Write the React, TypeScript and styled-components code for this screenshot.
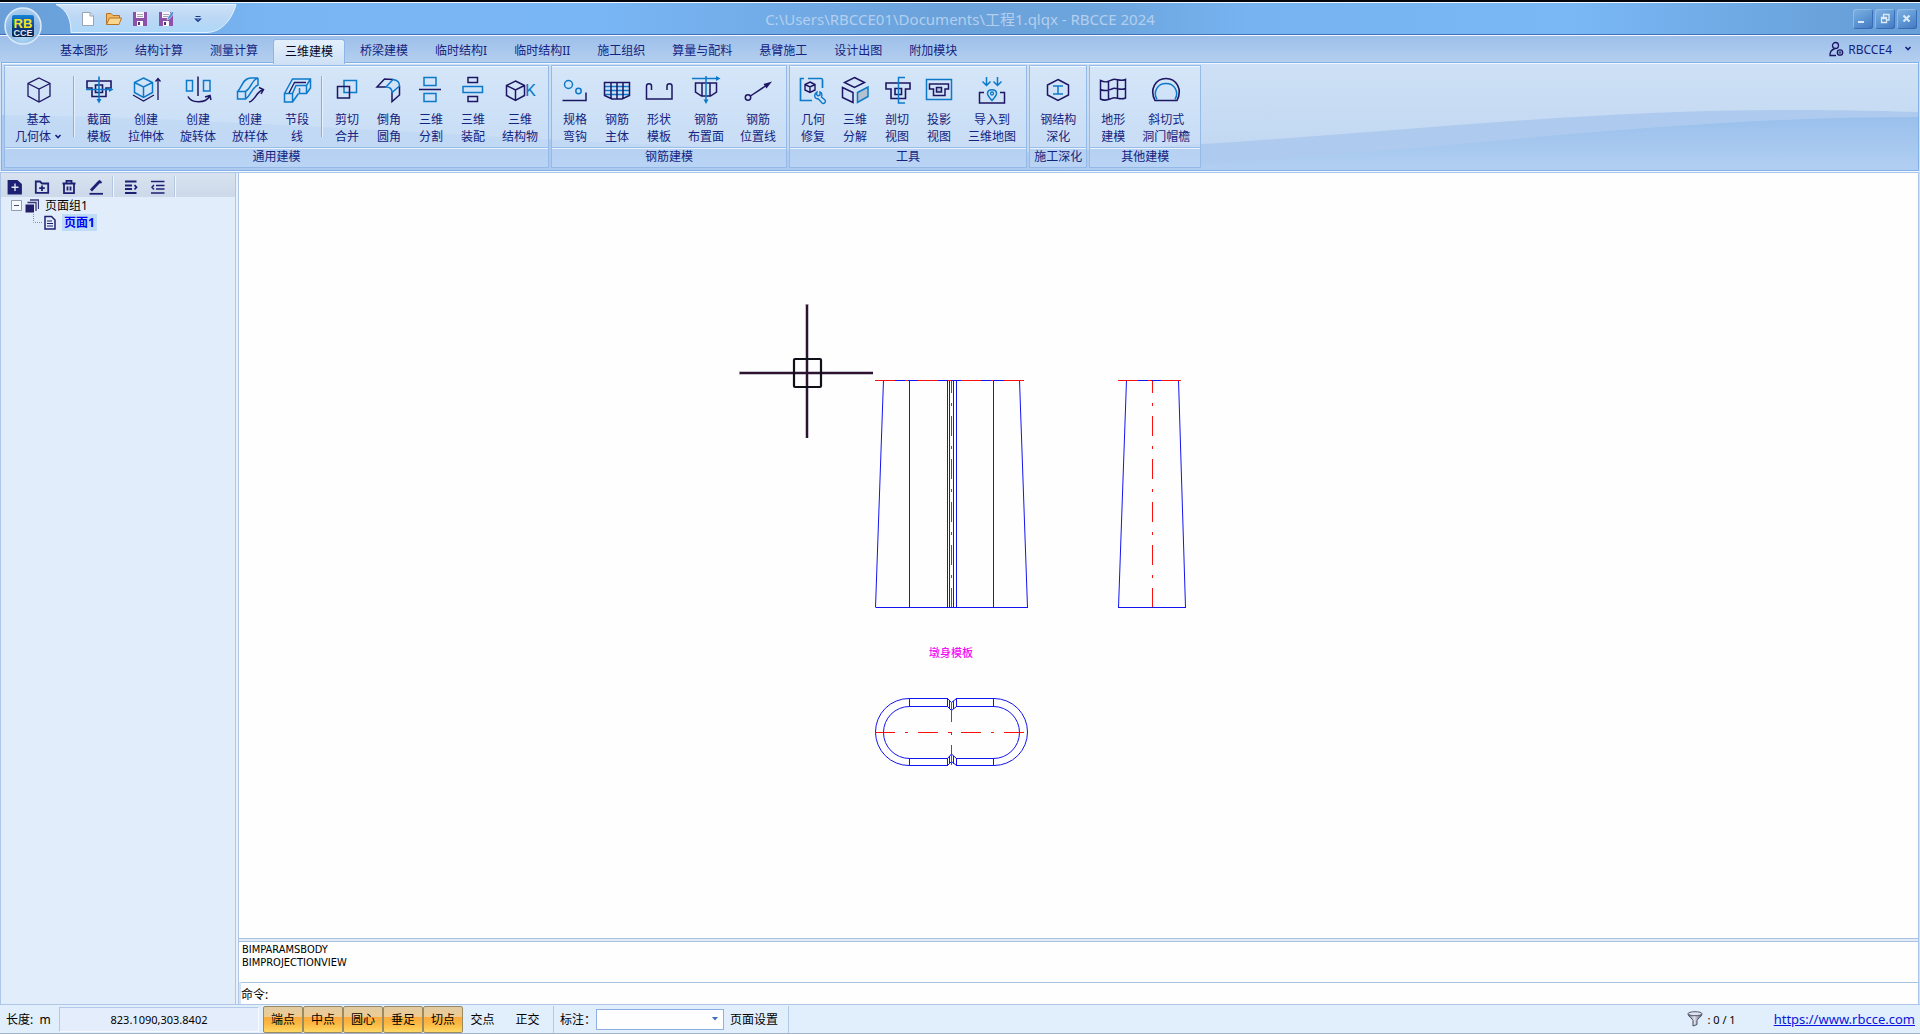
import React from "react";
import styled, { createGlobalStyle, css } from "styled-components";

const NAVY = "#1d1663";
const BLUE = "#0c79c9";
const INK = "#14237f";

const GlobalStyle = createGlobalStyle`
  *, *::before, *::after { box-sizing: border-box; }
  html, body, #root { height: 100%; }
  body {
    margin: 0;
    overflow: hidden;
    font-family: "Noto Sans", "Noto Sans CJK SC", sans-serif;
    font-size: 12px;
    color: #000;
  }
  button, input, select { font: inherit; color: inherit; }
  button { margin: 0; padding: 0; border: 0; background: none; cursor: pointer; }
`;

const Window = styled.div`
  display: flex;
  flex-direction: column;
  height: 100%;
  background: #d3e4f8;
`;

/* Title bar */

const TitleBar = styled.header`
  position: relative;
  display: flex;
  align-items: center;
  flex: none;
  height: 36px;
  padding: 0 3px 0 5px;
  border-top: 2px solid #05060c;
  border-bottom: 1px solid #f4f9ff;
  box-shadow: inset 0 1px 0 #eef6ff, inset 0 -1px 0 #4170bb;
  background: linear-gradient(
    90deg,
    #6a9fd8 0%, #6aa2dc 3%, #79b5f3 14%, #79b6f5 31%,
    #6ba2db 49%, #6ca4dc 57%, #76b3f0 65%, #79b7f5 82%, #68a0d8 97%, #68a0d8 100%
  );
`;

const AppLogo = styled.button`
  position: absolute;
  top: 5px;
  left: 4px;
  z-index: 2;
  width: 38px;
  height: 38px;
  svg { display: block; }
`;

const QuickAccess = styled.div`
  position: relative;
  display: flex;
  align-items: center;
  align-self: flex-start;
  gap: 10px;
  width: 184px;
  height: 29px;
  margin: 2px 0 0 51px;
  padding-left: 24px;
`;

const QuickShape = styled.svg`
  position: absolute;
  inset: 0;
  width: 184px;
  height: 29px;
`;

const QuickButton = styled.button<{ $last?: boolean }>`
  position: relative;
  width: 16px;
  height: 16px;
  margin-left: ${(p) => (p.$last ? "6px" : "0")};
  svg { display: block; }
`;

const Title = styled.h1`
  position: absolute;
  inset: 0;
  margin: 0;
  text-align: center;
  font: 400 15px/34px "Noto Sans", "Noto Sans CJK SC", sans-serif;
  color: #b4cfee;
  pointer-events: none;
`;

const WindowButtons = styled.div`
  position: relative;
  display: flex;
  gap: 2px;
  margin-left: auto;
`;

const WindowButton = styled.button`
  width: 20px;
  height: 20px;
  border-radius: 3px;
  background: linear-gradient(150deg, #83b2e2, #5d97d3 50%, #4476bf);
  box-shadow: inset -1px -1px 0 #3a6bb8, inset 1px 1px 0 #8dbbe8;
  svg { display: block; }
`;

/* Ribbon */

const TabRow = styled.nav`
  display: flex;
  align-items: flex-end;
  flex: none;
  gap: 3px;
  height: 26px;
  padding: 0 21px 0 48px;
  background: linear-gradient(#9dbfe9, #b4cff0);
`;

const Tab = styled.button<{ $active?: boolean }>`
  height: 24px;
  padding: 0 12px;
  line-height: 26px;
  color: ${INK};
  white-space: nowrap;
  ${(p) =>
    p.$active &&
    css`
      position: relative;
      z-index: 1;
      height: 25px;
      margin-bottom: -2px;
      border: 1px solid #8db6e8;
      border-bottom: 0;
      border-radius: 3px 3px 0 0;
      padding: 0 11px;
      line-height: 24px;
      background: linear-gradient(#e4effb, #cfe1f6);
      color: #05051c;
    `}
`;

const UserMenu = styled.button`
  display: flex;
  align-items: center;
  gap: 4px;
  height: 26px;
  margin-left: auto;
  margin-right: -13px;
  color: ${INK};
  svg:last-child { margin-left: 8px; }
`;

const Ribbon = styled.section`
  position: relative;
  display: flex;
  flex: none;
  gap: 2px;
  height: 109px;
  margin: 0 1px;
  padding: 2px 2px 3px;
  border: 1px solid #83b0e8;
  box-shadow: inset 0 1px 0 #f2f8ff;
  background: #c9dcf3;
`;

const Waves = styled.svg`
  position: absolute;
  inset: 1px 0 0;
  width: 100%;
  height: 106px;
`;

const Group = styled.div`
  position: relative;
  display: flex;
  flex-direction: column;
  height: 103px;
  border: 1px solid #96bae8;
  box-shadow: inset 0 1px 0 #f0f7ff;
  background: linear-gradient(rgba(215, 231, 249, 0.8), rgba(205, 225, 248, 0.65) 60%, rgba(205, 225, 248, 0.6));
`;

const GroupItems = styled.div`
  display: flex;
  flex: 1;
  padding: 0 2px;
`;

const GroupTitle = styled.div`
  height: 20px;
  border-top: 1px solid #9abde8;
  box-shadow: inset 0 1px 0 #e8f2fe;
  background: linear-gradient(#b5d0f0, #b9d4f5);
  color: ${INK};
  line-height: 18px;
  text-align: center;
  white-space: nowrap;
`;

const Tool = styled.button`
  display: flex;
  flex-direction: column;
  align-items: center;
  min-width: 42px;
  padding: 8px 8px 0;
  color: ${INK};
  line-height: 17px;
  white-space: nowrap;
`;

const ToolIcon = styled.svg`
  display: block;
  width: 30px;
  height: 30px;
  margin: 0 -2px 7px;
  fill: none;
  stroke: ${NAVY};
  stroke-width: 1.3;
  overflow: visible;
`;

const ToolLine = styled.span`
  display: flex;
  align-items: center;
  gap: 3px;
`;

const Divider = styled.span`
  width: 2px;
  height: 61px;
  margin: 10px 3px 0;
  border-left: 1px solid #86aede;
  border-right: 1px solid #e6f1fd;
`;

/* Workspace */

const Workspace = styled.div`
  display: flex;
  flex: 1;
  min-height: 0;
  margin: 1px 1px 0 0;
  border-top: 1px solid #a9c5e8;
  border-right: 1px solid #a9c5e8;
  box-shadow: 0 -1px 0 #f4f9ff;
`;

const Sidebar = styled.aside`
  display: flex;
  flex-direction: column;
  flex: none;
  width: 236px;
  border-left: 1px solid #b0c6e6;
  border-right: 1px solid #b0c6e6;
  background: #e2edfb;
`;

const SideTools = styled.div`
  display: flex;
  align-items: center;
  flex: none;
  gap: 11px;
  height: 24px;
  padding: 3px 0 0 6px;
  background: linear-gradient(#d8e2f0, #ccd9ea);
`;

const SideButton = styled.button`
  width: 16px;
  height: 16px;
  svg { display: block; fill: none; stroke: #1d2173; stroke-width: 1.8; }
`;

const SideDivider = styled.span`
  width: 2px;
  height: 21px;
  margin: 0 -2px 0 -3px;
  border-left: 1px solid #b4c6e0;
  border-right: 1px solid #f0f6fd;
`;

const Tree = styled.ul`
  margin: 0;
  padding: 0 0 0 10px;
  list-style: none;
`;

const TreeRow = styled.li<{ $child?: boolean }>`
  display: flex;
  align-items: center;
  gap: 3px;
  height: 17px;
  padding-left: ${(p) => (p.$child ? "20px" : "0")};
  svg { flex: none; }
`;

const TreeText = styled.button<{ $selected?: boolean }>`
  height: 17px;
  margin-left: ${(p) => (p.$selected ? "2px" : "1px")};
  padding: 0 2px;
  line-height: 17px;
  ${(p) =>
    p.$selected &&
    css`
      background: #bfdcf7;
      color: #0000f0;
      font-weight: 700;
    `}
`;

const Splitter = styled.div`
  flex: none;
  width: 3px;
  border-right: 1px solid #b0c6e6;
  background: #e9f1fb;
`;

const Main = styled.main`
  display: flex;
  flex-direction: column;
  flex: 1;
  min-width: 0;
`;

const Drawing = styled.svg`
  display: block;
  flex: 1;
  width: 100%;
  min-height: 0;
  background: #fdfefd;
`;

const HSplitter = styled.div`
  flex: none;
  height: 4px;
  border-top: 1px solid #a9c2e0;
  border-bottom: 1px solid #a9c2e0;
  background: #e3edf9;
`;

const History = styled.div`
  flex: none;
  height: 40px;
  padding: 1px 3px;
  background: #fdfefd;
  font-family: "DejaVu Sans Condensed", "DejaVu Sans", sans-serif;
  font-size: 11px;
  line-height: 13px;
`;

const CommandRow = styled.div`
  display: flex;
  align-items: center;
  flex: none;
  height: 22px;
  margin-left: 2px;
  border-top: 1px solid #a9c2e0;
  background: #fdfefd;
  input {
    flex: 1;
    height: 18px;
    padding: 0 4px;
    border: 0;
    outline: 0;
    background: transparent;
  }
`;

/* Status bar */

const StatusBar = styled.footer`
  display: flex;
  align-items: center;
  flex: none;
  height: 30px;
  padding: 0 5px 0 6px;
  border-top: 1px solid #b0c6e6;
  border-bottom: 1px solid #a5b4c8;
  background: #e1eefb;
`;

const Unit = styled.span`
  width: 53px;
  white-space: pre;
`;

const Coordinates = styled.output`
  width: 200px;
  height: 25px;
  margin-right: 4px;
  border: 1px solid #b3c8e6;
  border-right-color: #f6faff;
  border-bottom-color: #f6faff;
  background: #e3edfb;
  font-size: 11px;
  line-height: 23px;
  text-align: center;
`;

const Snap = styled.button<{ $on?: boolean }>`
  width: 40px;
  height: 27px;
  ${(p) =>
    p.$on
      ? css`
          border: 1px solid #9a8a62;
          border-radius: 2px;
          background: linear-gradient(#e2cba2, #eecb92 38%, #fbab3c 42%, #fbb640 65%, #ffd865);
        `
      : css`
          width: 45px;
          padding-right: 6px;
        `}
`;

const StatusDivider = styled.span`
  width: 1px;
  height: 27px;
  margin-right: 6px;
  background: #b3c8e6;
`;

const LabelField = styled.label`
  display: flex;
  align-items: center;
  margin-right: 6px;
`;

const SelectWrap = styled.span`
  position: relative;
  display: flex;
  svg { position: absolute; top: 8px; right: 6px; pointer-events: none; }
`;

const StyleSelect = styled.select`
  width: 128px;
  height: 21px;
  margin: 0;
  border: 1px solid #8eb0e0;
  border-radius: 0;
  background: #fdfefd;
  appearance: none;
`;

const PageSetup = styled.button`
  margin-right: 10px;
  line-height: 27px;
`;

const Filter = styled.span`
  display: flex;
  align-items: center;
  gap: 4px;
  margin: 0 38px 0 auto;
  font-size: 11px;
  white-space: pre;
`;

const Site = styled.a`
  color: #0a16e0;
  font-size: 13px;
  text-decoration: underline;
`;

const icons: Record<string, React.ReactNode> = {
  solid: (
    <path d="M15 4 26 9.500V22L15 28 4 22V9.500ZM4 9.500 15 15 26 9.500M15 15V28" />
  ),
  section: (
    <>
      <path d="M3 7H27V14H22V22.500H8V14H3ZM11.500 11H18.500V18.500H11.500Z" strokeWidth={1.6} />
      <g stroke={BLUE}>
        <path d="M15 2.500V26M2 15.500H26" strokeWidth={1.6} />
        <path d="M12.500 25H17.500L15 29.500ZM25 13V18L29.500 15.500Z" fill={BLUE} stroke="none" />
      </g>
    </>
  ),
  extrude: (
    <>
      <path stroke={BLUE} strokeWidth={1.5} d="M12.500 4 21.500 8.500V18.500L12.500 23.500 3.500 18.500V8.500ZM3.500 8.500 12.500 13 21.500 8.500M12.500 13V23.500" />
      <path d="M2 21 12.500 27 23 21M27 26V5M24.500 7.500 27 4.500 29.500 7.500" />
    </>
  ),
  revolve: (
    <>
      <path stroke={BLUE} strokeWidth={1.5} d="M3.500 6.500H9.500V17H3.500ZM20.500 6.500H27V17H20.500Z" />
      <path d="M15 2.500V22" strokeWidth={1.5} />
      <path d="M5 22.500C8 29 22 30 26.500 22.500M22 23 27 21.500 28 26" strokeWidth={1.5} />
    </>
  ),
  loft: (
    <>
      <path stroke={BLUE} d="M2.500 17.500H10.500V25H2.500ZM2.500 17.500C7 14 7 5 15 4H23C16 6 17 14 10.500 17.500M10.500 25C16 22 16 14 23 11V4" strokeWidth={1.5} />
      <path d="M14 28C20 27 21 18 27.500 16M24 13.500 28.500 15.500 26 20" strokeWidth={1.5} />
    </>
  ),
  segment: (
    <>
      <path stroke={BLUE} strokeWidth={1.5} d="M2.500 19.500H10.500V28H2.500ZM2.500 19.500 10.500 5H28.500V14L24.500 19.500H17.500V14M10.500 19.500 14 11.500H24.500L28.500 5M10.500 28 16.500 19.500M24.500 11.500V19.500" />
      <path d="M7 19 12.500 8.500H24" />
    </>
  ),
  cutMerge: (
    <>
      <path stroke={BLUE} strokeWidth={1.5} d="M12 6.500H24.500V18.500H12Z" />
      <path strokeWidth={1.5} d="M5.500 12.500H17.500V24H5.500Z" />
    </>
  ),
  fillet: (
    <>
      <path d="M19 5.500 10.500 5 3 13H12M25.500 12V21L18 27.500V18" strokeWidth={1.5} />
      <path stroke={BLUE} strokeWidth={1.5} d="M19 5.500C23 6 25.500 8 25.500 12L18 18.500C18 15 16 13 12 13Z" />
    </>
  ),
  split: (
    <>
      <path stroke={BLUE} strokeWidth={1.5} d="M8 3.500H20V11.500H8ZM8 19.500H20V27.500H8Z" />
      <path d="M3 15.500H25" strokeWidth={1.5} />
    </>
  ),
  assemble: (
    <>
      <path d="M10 3.500H19.500V8.500H10ZM10 22.500H19.500V27.500H10Z" strokeWidth={1.5} />
      <path stroke={BLUE} strokeWidth={1.5} d="M5 12.500H24.500V18.500H5Z" />
    </>
  ),
  structure: (
    <>
      <path d="M10.500 7 19.500 11.500V21.500L10.500 26.500 1.500 21.500V11.500ZM1.500 11.500 10.500 16 19.500 11.500M10.500 16V26.500" strokeWidth={1.5} />
      <text x="20" y="22" fontSize="17" fill={BLUE} stroke="none" fontFamily="Roboto, sans-serif">K</text>
    </>
  ),
  hookSpec: (
    <>
      <g stroke={BLUE} strokeWidth={1.5}>
        <circle cx="8.500" cy="10.500" r="4" />
        <circle cx="18.500" cy="17" r="2.700" />
      </g>
      <path d="M2.500 26.500H26V18.500" strokeWidth={1.5} />
    </>
  ),
  rebarBody: (
    <>
      <path stroke={BLUE} d="M3 12.500H27M3 16.500H27M3 20.500H27" />
      <path strokeWidth={1.5} d="M2.500 8.500H27.500V21.500L20 25H10L2.500 21.500ZM9 8.500V24M15 8.500V25M21 8.500V24" />
    </>
  ),
  shapeForm: (
    <path strokeWidth={1.5} d="M7.500 16V12C7.500 9 2.500 9 2.500 12V25H28V12C28 9 23 9 23 12V16" />
  ),
  layoutFace: (
    <>
      <path strokeWidth={1.5} d="M4.500 9H25.500V18L19.500 22H10.500L4.500 18ZM11 9V22M19 9V22" />
      <g stroke={BLUE} strokeWidth={1.5}>
        <path d="M1 4.500H25M15 2V27" />
        <path d="M25 2V7L29.500 4.500ZM12.500 25.500H17.500L15 30Z" fill={BLUE} stroke="none" />
      </g>
    </>
  ),
  positionLine: (
    <>
      <circle cx="5" cy="23.500" r="2.700" strokeWidth={1.5} />
      <path strokeWidth={1.5} d="M7.500 22 24 11" />
      <path d="M29 7.500 20.500 10 23.500 14.500Z" fill={NAVY} stroke="none" />
    </>
  ),
  repair: (
    <>
      <path stroke={BLUE} strokeWidth={1.7} d="M6 4.500H2.500V26.500H14M10 4.500H23C24.500 4.500 24.500 5 24.500 6.500V14" />
      <path strokeWidth={1.4} d="M12 8 17 10.500V16L12 18.500 7 16V10.500ZM7 10.500 12 13 17 10.500M12 13V18.500" />
      <path stroke={BLUE} strokeWidth={1.4} d="M19 18C15.500 20 16 25 20.500 25L24 29C26 30.500 28.500 28 27 26L23.500 23C24.500 20.500 23.500 18.500 22 18V21L20 22 18.500 20.500Z" />
    </>
  ),
  explode: (
    <>
      <path strokeWidth={1.5} d="M14.500 3.500 24.500 8.500 14.500 13.500 4.500 8.500ZM2.500 13.500 13 18.500V28.500L2.500 23.500Z" />
      <path stroke={BLUE} strokeWidth={1.5} fill="#b4c1cf" d="M17.500 18.500 28 13V22.500L17.500 28.500Z" />
    </>
  ),
  cutView: (
    <>
      <path strokeWidth={1.6} d="M4 9H28V15H23.500V24.500H9V15H4ZM13 14.500H19.500V20.500H13Z" />
      <path stroke={BLUE} strokeWidth={1.5} d="M23 3.500H16.500V29H23" />
    </>
  ),
  projectView: (
    <>
      <path stroke={BLUE} strokeWidth={1.5} d="M2.500 5.500H27.500V25.500H2.500Z" />
      <path strokeWidth={1.5} d="M5.500 10H24.500V15H21V21.500H9.500V15H5.500Z" />
      <path strokeWidth={1.5} fill="#b4c1e0" d="M12.500 13.500H17.500V18H12.500Z" />
    </>
  ),
  importMap: (
    <>
      <path stroke={BLUE} strokeWidth={1.5} d="M9.500 3V11M5.500 7.500 9.500 11.500 13.500 7.500M20.500 3V11M16.500 7.500 20.500 11.500 24.500 7.500M15 26.500C12 23 10.500 21.500 10.500 19.500 10.500 14.500 19.500 14.500 19.500 19.500 19.500 21.500 18 23 15 26.500Z" />
      <circle cx="15" cy="19.500" r="1.500" stroke={BLUE} />
      <path strokeWidth={1.5} d="M7 18.500H2.500V29H27.500V18.500H23" />
    </>
  ),
  steel: (
    <>
      <path strokeWidth={1.5} d="M15 5.500 25.500 11V21L15 26.500 4.500 21V11Z" />
      <path stroke={BLUE} strokeWidth={1.5} d="M10 12H20M10 20H20M15 12V20" />
    </>
  ),
  terrain: (
    <path strokeWidth={1.5} d="M2.500 6.500C9 10 11 6.500 15 5.500S22 8 27.500 5.500V24C22 26.500 19 23 15 24S8 28 2.500 25ZM2.500 15.500C9 18.500 11 15.500 15 14.500S22 17 27.500 14.500M10.500 7.500V26M19.500 5.500V24" />
  ),
  portal: (
    <>
      <path strokeWidth={1.6} d="M4 26.500C-2 15 5 4.500 15 4.500S32 15 26 26.500Z" />
      <path stroke={BLUE} strokeWidth={1.5} d="M6 25.500C1.500 17 7 9.500 15 9.500S28.500 17 24 25.500" />
    </>
  ),
};

type ToolDef = { icon: string; lines: [string, string]; menu?: boolean; divider?: boolean };

const groups: { title: string; tools: ToolDef[] }[] = [
  {
    title: "通用建模",
    tools: [
      { icon: "solid", lines: ["基本", "几何体"], menu: true, divider: true },
      { icon: "section", lines: ["截面", "模板"] },
      { icon: "extrude", lines: ["创建", "拉伸体"] },
      { icon: "revolve", lines: ["创建", "旋转体"] },
      { icon: "loft", lines: ["创建", "放样体"] },
      { icon: "segment", lines: ["节段", "线"], divider: true },
      { icon: "cutMerge", lines: ["剪切", "合并"] },
      { icon: "fillet", lines: ["倒角", "圆角"] },
      { icon: "split", lines: ["三维", "分割"] },
      { icon: "assemble", lines: ["三维", "装配"] },
      { icon: "structure", lines: ["三维", "结构物"] },
    ],
  },
  {
    title: "钢筋建模",
    tools: [
      { icon: "hookSpec", lines: ["规格", "弯钩"] },
      { icon: "rebarBody", lines: ["钢筋", "主体"] },
      { icon: "shapeForm", lines: ["形状", "模板"] },
      { icon: "layoutFace", lines: ["钢筋", "布置面"] },
      { icon: "positionLine", lines: ["钢筋", "位置线"] },
    ],
  },
  {
    title: "工具",
    tools: [
      { icon: "repair", lines: ["几何", "修复"] },
      { icon: "explode", lines: ["三维", "分解"] },
      { icon: "cutView", lines: ["剖切", "视图"] },
      { icon: "projectView", lines: ["投影", "视图"] },
      { icon: "importMap", lines: ["导入到", "三维地图"] },
    ],
  },
  { title: "施工深化", tools: [{ icon: "steel", lines: ["钢结构", "深化"] }] },
  {
    title: "其他建模",
    tools: [
      { icon: "terrain", lines: ["地形", "建模"] },
      { icon: "portal", lines: ["斜切式", "洞门帽檐"] },
    ],
  },
];

const tabs = [
  "基本图形", "结构计算", "测量计算", "三维建模", "桥梁建模", "临时结构I",
  "临时结构II", "施工组织", "算量与配料", "悬臂施工", "设计出图", "附加模块",
];

const snaps = ["端点", "中点", "圆心", "垂足", "切点"];

const Chevron = () => (
  <svg width="8" height="6" viewBox="0 0 8 6" fill="none" stroke={INK} strokeWidth="1.6">
    <path d="M1.500 1 4 3.500 6.500 1" />
  </svg>
);

const Logo = () => (
  <svg width="38" height="38" viewBox="0 0 38 38">
    <defs>
      <radialGradient id="orb" cx="50%" cy="75%" r="70%">
        <stop offset="0" stopColor="#b9e0fa" />
        <stop offset="0.6" stopColor="#86b5e2" />
        <stop offset="1" stopColor="#a9cbee" />
      </radialGradient>
      <linearGradient id="badge" x1="0" y1="0" x2="0" y2="1">
        <stop offset="0" stopColor="#1683d8" />
        <stop offset="0.55" stopColor="#0c3f86" />
        <stop offset="1" stopColor="#0a1c3e" />
      </linearGradient>
    </defs>
    <circle cx="19" cy="19" r="18" fill="url(#orb)" stroke="#dcebfa" strokeWidth="1.500" />
    <rect x="8" y="8" width="22" height="22" rx="2" fill="url(#badge)" />
    <text x="19" y="20.500" textAnchor="middle" fontFamily="Liberation Sans, sans-serif" fontWeight="700" fontSize="13" fill="#f6e51c">RB</text>
    <text x="19" y="29" textAnchor="middle" fontFamily="Liberation Sans, sans-serif" fontWeight="700" fontSize="9" fill="#e3e8f2">CCE</text>
  </svg>
);

const Disk = ({ pen }: { pen?: boolean }) => (
  <svg width="16" height="16" viewBox="0 0 16 16">
    <path d="M1 1H15V15H1Z" fill="#8b52a8" />
    <path d="M4 1H12V7H4ZM5 10H11V15H5Z" fill="#fbf8fd" />
    <path d="M5 3.500H11M5 5.500H11" stroke="#a9a2b5" />
    <path d="M6 11H8V14H6Z" fill="#55306e" />
    {pen && <path d="M9 9 10 6 14 0.500 16 2 12 7.500Z" fill="#4a93d4" stroke="#e1eefa" strokeWidth="0.600" />}
  </svg>
);

const quickIcons: { name: string; art: React.ReactNode }[] = [
  {
    name: "新建",
    art: (
      <svg width="16" height="16" viewBox="0 0 16 16">
        <path d="M2.500 1.500H10L13.500 5V14.500H2.500Z" fill="#fff" stroke="#98a3b5" />
        <path d="M10 1.500V5H13.500" fill="#dfe5ee" stroke="#98a3b5" />
      </svg>
    ),
  },
  {
    name: "打开",
    art: (
      <svg width="16" height="16" viewBox="0 0 16 16">
        <path d="M0.500 13.500V2.500H5L7 4.500H13.500V7" fill="#f2b861" stroke="#b4752b" />
        <path d="M0.500 13.500 3.500 7H15.500L13 13.500Z" fill="#fcd78f" stroke="#b4752b" />
      </svg>
    ),
  },
  { name: "保存", art: <Disk /> },
  { name: "另存为", art: <Disk pen /> },
  {
    name: "自定义",
    art: (
      <svg width="16" height="16" viewBox="0 0 16 16" fill="none" stroke="#173a8e" strokeWidth="1.200">
        <path d="M5.500 5.500H10.500M5.500 8H10.500L8 10.500Z" />
      </svg>
    ),
  },
];

const sideIcons: { name: string; art: React.ReactNode }[] = [
  {
    name: "新建页面",
    art: (
      <>
        <path d="M1.500 2H10L14 5.500V14.500H1.500Z" fill="#1d2173" />
        <path d="M8 4.500V12M4.500 8.300H11.500" stroke="#dfe7f3" strokeWidth={1.4} />
      </>
    ),
  },
  {
    name: "新建页面组",
    art: <path d="M1.800 2.500H6L8 4.500H14.200V13.800H1.800ZM8 6.500V12M5.200 9.200H10.800" />,
  },
  {
    name: "删除",
    art: <path d="M1.500 4.500H14.500M5.500 4.500V1.800H10.500V4.500M3 4.500V14.200H13V4.500M6.500 7.500V11.500M9.500 7.500V11.500" />,
  },
  {
    name: "重命名",
    art: (
      <>
        <path d="M1.500 14.800H15" />
        <path d="M3 11.500 11.500 2.500" strokeWidth={2.800} />
        <path d="M11 1.500 13.500 4" />
      </>
    ),
  },
  { name: "展开", art: <path d="M2 2.500H13.500M2 6.500H9M2 10H9M2 14H13.500M11.500 6 13.500 8.300 11.500 10.500" /> },
  { name: "折叠", art: <path d="M1 2.500H14.500M6 6.500H14.500M6 10H14.500M1 14H14.500M4 6 2 8.300 4 10.500" strokeWidth={1.500} /> },
];

const windowIcons: { name: string; art: React.ReactNode }[] = [
  { name: "最小化", art: <path d="M5 13H11" strokeWidth="2" /> },
  { name: "还原", art: <path d="M8.500 8V5.500H14V11H11.500M6.500 8.500H11.500V13.500H6.500ZM6.500 9.500H11.500" strokeWidth="1.300" /> },
  { name: "关闭", art: <path d="M6.500 6.500 12.500 12.500M12.500 6.500 6.500 12.500" strokeWidth="2.200" /> },
];

const BLUE_LINE = "#1414f0";

const Model = () => (
  <Drawing role="img" aria-label="墩身模板">
    <g transform="translate(-239 -173)" fill="none" shapeRendering="crispEdges">
      <g stroke={BLUE_LINE}>
        <path d="M883 380.500H1020M875.500 607.500H1028M909.500 380V607M947.500 380V607M949.500 380V607M953.500 380V607M956.500 380V607M993.500 380V607" />
        <path d="M883.500 380 875.500 607.500M1019.500 380 1027.500 607.500M1126.500 380 1118.500 607.500M1178.500 380 1185.500 607.500" shapeRendering="auto" />
        <path d="M1126 380.500H1179M1118 607.500H1186" />
        <g shapeRendering="auto">
          <path d="M947.500 698.500H909A33.500 33.500 0 0 0 909 765.500H947.500L951.500 761.500 956.500 765.500H994A33.500 33.500 0 0 0 994 698.500H956.500L951.500 702.500Z" />
          <path d="M947.500 706.500H909.500A26 26 0 0 0 909.500 758.500H947.500L951.500 754 956.500 758.500H993.500A26 26 0 0 0 993.500 706.500H956.500L951.500 710.500Z" />
        </g>
        <path d="M909.500 698V707M909.500 758V766M993.500 698V707M993.500 758V766M947.500 698V707M956.500 698V707M947.500 758V766M956.500 758V766M949.500 701V709M953.500 701V709M949.500 756V764M953.500 756V764" />
      </g>
      <g stroke="#fb1010" strokeDasharray="20 10 3 10">
        <path d="M875 380.500H1024M1118 380.500H1182M875 732.500H1024" />
        <path d="M951.500 381V607M1152.500 381V607" strokeDashoffset="8" />
        <path d="M951.500 702V765" />
      </g>
      <g shapeRendering="auto">
        <path d="M807 304V438M739 373H873" stroke="#8b8798" strokeWidth="3" />
        <path d="M807 305V438M740 373H873" stroke="#2e1230" strokeWidth="2" />
        <rect x="794" y="359" width="27" height="28" rx="1" stroke="#101018" strokeWidth="2.200" />
      </g>
      <text x="951" y="657" textAnchor="middle" fontSize="11" fontWeight="500" fill="#f40cf4" fontFamily="Noto Sans CJK SC, sans-serif">
        墩身模板
      </text>
    </g>
  </Drawing>
);

export default function App() {
  return (
    <Window>
      <GlobalStyle />
      <TitleBar>
        <Title>C:\Users\RBCCE01\Documents\工程1.qlqx - RBCCE 2024</Title>
        <AppLogo aria-label="RBCCE">
          <Logo />
        </AppLogo>
        <QuickAccess>
          <QuickShape viewBox="0 0 184 29">
            <defs>
              <linearGradient id="quick" x1="0" y1="0" x2="0" y2="1">
                <stop offset="0" stopColor="#cfe2f7" />
                <stop offset="0.450" stopColor="#bcd8f5" />
                <stop offset="1" stopColor="#aed7f8" />
              </linearGradient>
            </defs>
            <path d="M0 0.500H180C176 15 166 28.500 150 28.500H15C15 17 12 6 0 0.500Z" fill="url(#quick)" stroke="#e4f1fe" />
          </QuickShape>
          {quickIcons.map((q, i) => (
            <QuickButton key={q.name} aria-label={q.name} $last={i === 4}>
              {q.art}
            </QuickButton>
          ))}
        </QuickAccess>
        <WindowButtons>
          {windowIcons.map((w) => (
            <WindowButton key={w.name} aria-label={w.name}>
              <svg width="20" height="20" viewBox="0 0 20 20" fill="none" stroke="#dbe9f8">
                {w.art}
              </svg>
            </WindowButton>
          ))}
        </WindowButtons>
      </TitleBar>

      <TabRow>
        {tabs.map((t) => (
          <Tab key={t} $active={t === "三维建模"}>
            {t}
          </Tab>
        ))}
        <UserMenu>
          <svg width="15" height="16" viewBox="0 0 15 16" fill="none" stroke={NAVY} strokeWidth="1.300">
            <circle cx="6.500" cy="4.500" r="3" />
            <path d="M7 14.500H1C1 10.500 3 8.500 5.500 8" />
            <circle cx="11" cy="11.500" r="2.700" strokeWidth="1.300" />
            <circle cx="11" cy="11.500" r="0.800" strokeWidth="1" />
          </svg>
          RBCCE4
          <Chevron />
        </UserMenu>
      </TabRow>

      <Ribbon>
        <Waves viewBox="0 0 1916 106" preserveAspectRatio="none">
          <defs>
            <linearGradient id="upper" x1="0" y1="0" x2="0" y2="1">
              <stop offset="0" stopColor="#cde0f5" />
              <stop offset="1" stopColor="#bfd6f1" />
            </linearGradient>
            <linearGradient id="lower" x1="0" y1="0" x2="0" y2="1">
              <stop offset="0" stopColor="#99c0ec" />
              <stop offset="1" stopColor="#b2cff1" />
            </linearGradient>
          </defs>
          <path d="M0 0H1916V106H0Z" fill="url(#upper)" />
          <path d="M0 51C250 54 500 78 900 90 1250 90 1500 46 1780 46 1850 46 1880 47 1916 48V106H0Z" fill="#aecbef" />
          <path d="M1000 106C1350 104 1600 53 1916 53V106Z" fill="url(#lower)" />
        </Waves>
        {groups.map((g) => (
          <Group key={g.title}>
            <GroupItems>
              {g.tools.map((t) => (
                <React.Fragment key={t.icon}>
                  <Tool>
                    <ToolIcon viewBox="0 0 30 30">{icons[t.icon]}</ToolIcon>
                    <ToolLine>{t.lines[0]}</ToolLine>
                    <ToolLine>
                      {t.lines[1]}
                      {t.menu && <Chevron />}
                    </ToolLine>
                  </Tool>
                  {t.divider && <Divider />}
                </React.Fragment>
              ))}
            </GroupItems>
            <GroupTitle>{g.title}</GroupTitle>
          </Group>
        ))}
      </Ribbon>

      <Workspace>
        <Sidebar>
          <SideTools>
            {sideIcons.map((s, i) => (
              <React.Fragment key={s.name}>
                {i === 4 && <SideDivider />}
                <SideButton aria-label={s.name}>
                  <svg width="16" height="16" viewBox="0 0 16 16">
                    {s.art}
                  </svg>
                </SideButton>
                {i === 5 && <SideDivider />}
              </React.Fragment>
            ))}
          </SideTools>
          <Tree>
            <TreeRow>
              <svg width="11" height="11" viewBox="0 0 11 11">
                <path d="M0.500 0.500H10.500V10.500H0.500Z" fill="#f6f9fd" stroke="#8f9db2" />
                <path d="M3 5.500H8" stroke="#44506a" />
              </svg>
              <svg width="14" height="14" viewBox="0 0 14 14">
                <path d="M0.500 5.500H9V13.500H0.500Z" fill="#231f6b" />
                <path d="M2.500 3.500H11V12M5 1H13.500V10" fill="none" stroke="#3a3778" strokeWidth="1.300" />
              </svg>
              <TreeText>页面组1</TreeText>
            </TreeRow>
            <TreeRow $child>
              <svg width="26" height="17" viewBox="0 0 26 17" fill="none">
                <path d="M2.500 0V8.500H12" stroke="#8490a8" strokeDasharray="1 1" />
                <path d="M14 2.500H20.500L24 6V15H14Z" stroke="#1d2173" strokeWidth="1.500" />
                <path d="M16 7H21M16 9.500H22M16 12H22" stroke="#1d2173" />
              </svg>
              <TreeText $selected>页面1</TreeText>
            </TreeRow>
          </Tree>
        </Sidebar>
        <Splitter />
        <Main>
          <Model />
          <HSplitter />
          <History>
            <div>BIMPARAMSBODY</div>
            <div>BIMPROJECTIONVIEW</div>
          </History>
          <CommandRow>
            <label htmlFor="command">命令:</label>
            <input id="command" type="text" />
          </CommandRow>
        </Main>
      </Workspace>

      <StatusBar>
        <Unit>长度:  m</Unit>
        <Coordinates>823.1090,303.8402</Coordinates>
        {snaps.map((s) => (
          <Snap key={s} $on>
            {s}
          </Snap>
        ))}
        <Snap>交点</Snap>
        <Snap>正交</Snap>
        <StatusDivider />
        <LabelField>
          标注：
          <SelectWrap>
            <StyleSelect />
            <svg width="6" height="4" viewBox="0 0 6 4">
              <path d="M0 0H6L3 3.500Z" fill="#3f6fc0" />
            </svg>
          </SelectWrap>
        </LabelField>
        <PageSetup>页面设置</PageSetup>
        <StatusDivider />
        <Filter>
          <svg width="16" height="16" viewBox="0 0 16 16">
            <defs>
              <linearGradient id="funnel" x1="0" y1="0" x2="1" y2="0">
                <stop offset="0" stopColor="#5a5f75" />
                <stop offset="0.450" stopColor="#dfe3ec" />
                <stop offset="1" stopColor="#4c5068" />
              </linearGradient>
            </defs>
            <path d="M1 3C1 5.500 6 8 6 9.500V15L10 13.500V9.500C10 8 15 5.500 15 3Z" fill="url(#funnel)" stroke="#4a4f66" />
            <ellipse cx="8" cy="2.700" rx="7" ry="2" fill="#dfe3ec" stroke="#555a70" />
          </svg>
          : 0 / 1
        </Filter>
        <Site href="https://www.rbcce.com">https://www.rbcce.com</Site>
      </StatusBar>
    </Window>
  );
}
